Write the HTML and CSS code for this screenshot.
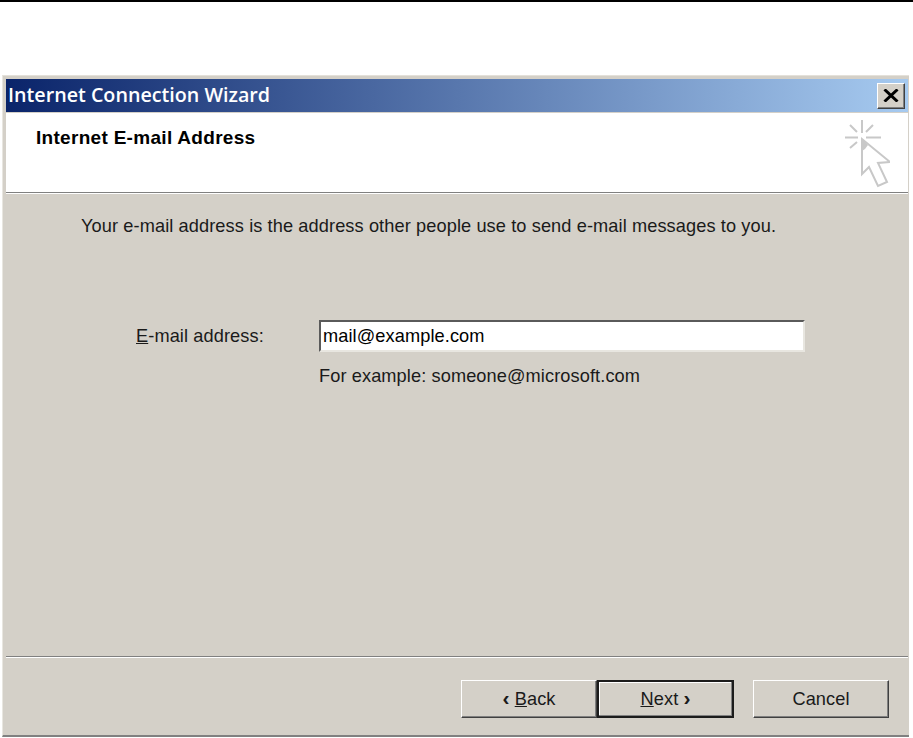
FILE: index.html
```html
<!DOCTYPE html>

<html lang="en">
    <head>
        <meta charset="UTF-8">
        <meta name="viewport" content="width=device-width, initial-scale=1.0">
        <title>Internet Connection Wizard</title>
        <link rel="stylesheet" href="styles.css">
    </head>

    <body>
        <div class="top-rule"></div>

        <div class="window">
            <div class="titlebar">
                <span class="title">Internet Connection Wizard</span>
                <button class="close-button" type="button" aria-label="Close">
                    <svg xmlns="http://www.w3.org/2000/svg" width="16" height="13" viewBox="0 0 16 13">
                        <path d="M1.5 0.5 L14.5 12.5 M14.5 0.5 L1.5 12.5" stroke="#000000" stroke-width="3" fill="none"/>
                    </svg>
                </button>
            </div>

            <div class="header">
                <h1>Internet E-mail Address</h1>
                <svg class="wizard-icon" xmlns="http://www.w3.org/2000/svg" width="50" height="74" viewBox="0 0 50 74">
                    <g stroke="#c8c8c8" stroke-width="2" fill="none">
                        <path d="M22 5 V18 M5 22.5 H18 M26 22.5 H41 M10 10 L17 17 M33 10 L26 17 M10 33 L17 27"/>
                    </g>
                    <path d="M22 24 L22 59 L29 52 L38 71 L47 67 L38 48 L50 47 Z" fill="#ffffff" stroke="#c8c8c8" stroke-width="2"/>
                    <path d="M22 24 L22 36 L25 34 L28 30 Z" fill="#c8c8c8"/>
                </svg>
            </div>

            <div class="content">
                <p class="intro">Your e-mail address is the address other people use to send e-mail messages to you.</p>
                <div class="field-row">
                    <label class="field-label" for="email"><u>E</u>-mail address:</label>
                    <div class="field">
                        <input class="field-input" id="email" type="text" value="mail@example.com">
                        <p class="field-hint">For example: someone@microsoft.com</p>
                    </div>
                </div>
            </div>

            <div class="footer">
                <div class="buttons">
                    <button class="btn btn-back" type="button"><b class="chevron">&lsaquo;</b> <u>B</u>ack</button>
                    <button class="btn btn-default" type="button"><u>N</u>ext <b class="chevron">&rsaquo;</b></button>
                    <button class="btn btn-cancel" type="button">Cancel</button>
                </div>
            </div>
        </div>
    </body>
</html>
```

FILE: styles.css
```css
html, body {
    margin: 0;
    padding: 0;
}

body {
    background-color: #ffffff;
    color: #1a1a1a;
    font-family: 'Liberation Sans', Arial, sans-serif;
    font-size: 18.2px;
    letter-spacing: 0.1px;
    height: 738px;
    overflow: hidden;
}

.top-rule {
    height: 2px;
    background-color: #000000;
    margin-bottom: 73px;
}

.window {
    width: 907px;
    height: 662px;
    margin-left: 2px;
    box-sizing: border-box;
    padding: 3px 1px 0 3px;
    background-color: #d4d0c8;
    border-top: 1px solid #e4e1da;
    border-left: 1px solid #e8e6e0;
    border-bottom: 2px solid #808080;
    display: flex;
    flex-direction: column;
}

.titlebar {
    height: 33px;
    flex-shrink: 0;
    box-sizing: border-box;
    padding: 0 3px 0 2px;
    display: flex;
    align-items: center;
    justify-content: space-between;
    background: linear-gradient(to right, #0a246a, #a6caf0);
}

.title {
    color: #ffffff;
    font-size: 19.7px;
    letter-spacing: 0;
    font-family: 'Open Sans', 'Liberation Sans', sans-serif;
    font-weight: 600;
    margin-top: -3px;
}

.close-button {
    width: 28px;
    height: 26px;
    padding: 0;
    display: flex;
    align-items: center;
    justify-content: center;
    background-color: #d4d0c8;
    border: 1px solid;
    border-color: #ffffff #404040 #404040 #ffffff;
    box-shadow: inset -1px -1px 0 #808080;
}

.header {
    height: 80px;
    flex-shrink: 0;
    margin-top: 1px;
    box-sizing: border-box;
    padding: 15px 18px 0 30px;
    display: flex;
    justify-content: space-between;
    align-items: flex-start;
    background-color: #ffffff;
    border-bottom: 1px solid #808080;
}

.header h1 {
    margin: 0;
    color: #000000;
    font-size: 19px;
    font-weight: bold;
    letter-spacing: 0.3px;
    line-height: 19px;
}

.wizard-icon {
    margin-top: -13px;
}

.content {
    flex: 1;
    border-top: 1px solid #ffffff;
    padding: 23px 0 0 75px;
}

.intro {
    margin: 0;
    line-height: 19px;
}

.field-row {
    display: flex;
    margin-top: 84px;
    padding-left: 55px;
}

.field-label {
    width: 183px;
    padding-top: 7px;
    line-height: 19px;
}

.field-input {
    display: block;
    width: 486px;
    height: 32px;
    box-sizing: border-box;
    margin: 0;
    padding: 1px 2px 0 2px;
    font-family: inherit;
    font-size: 18.2px;
    letter-spacing: 0.1px;
    color: #000000;
    background-color: #ffffff;
    border: 2px solid;
    border-color: #5a5a5a #e8e6e0 #e8e6e0 #5a5a5a;
    outline: none;
}

.field-hint {
    margin: 15px 0 0 0;
    line-height: 19px;
}

.footer {
    height: 79px;
    flex-shrink: 0;
    box-sizing: border-box;
    border-top: 1px solid #808080;
    box-shadow: inset 0 1px 0 #ffffff;
    padding-top: 23px;
}

.buttons {
    display: flex;
    padding-left: 455px;
}

.btn {
    height: 38px;
    padding: 0;
    box-sizing: border-box;
    font-family: inherit;
    font-size: 18.2px;
    letter-spacing: 0.1px;
    color: #1a1a1a;
    background-color: #d4d0c8;
    border: 1px solid;
    border-color: #ffffff #404040 #404040 #ffffff;
    box-shadow: inset -1px -1px 0 #808080;
}

.chevron {
    font-size: 21px;
    line-height: 16px;
}

.btn-back {
    width: 136px;
}

.btn-default {
    width: 137px;
    border: 2px solid #1c1c1c;
    box-shadow: inset -1px -1px 0 #808080, inset 1px 1px 0 #ffffff;
}

.btn-cancel {
    width: 136px;
    margin-left: 19px;
}
```
